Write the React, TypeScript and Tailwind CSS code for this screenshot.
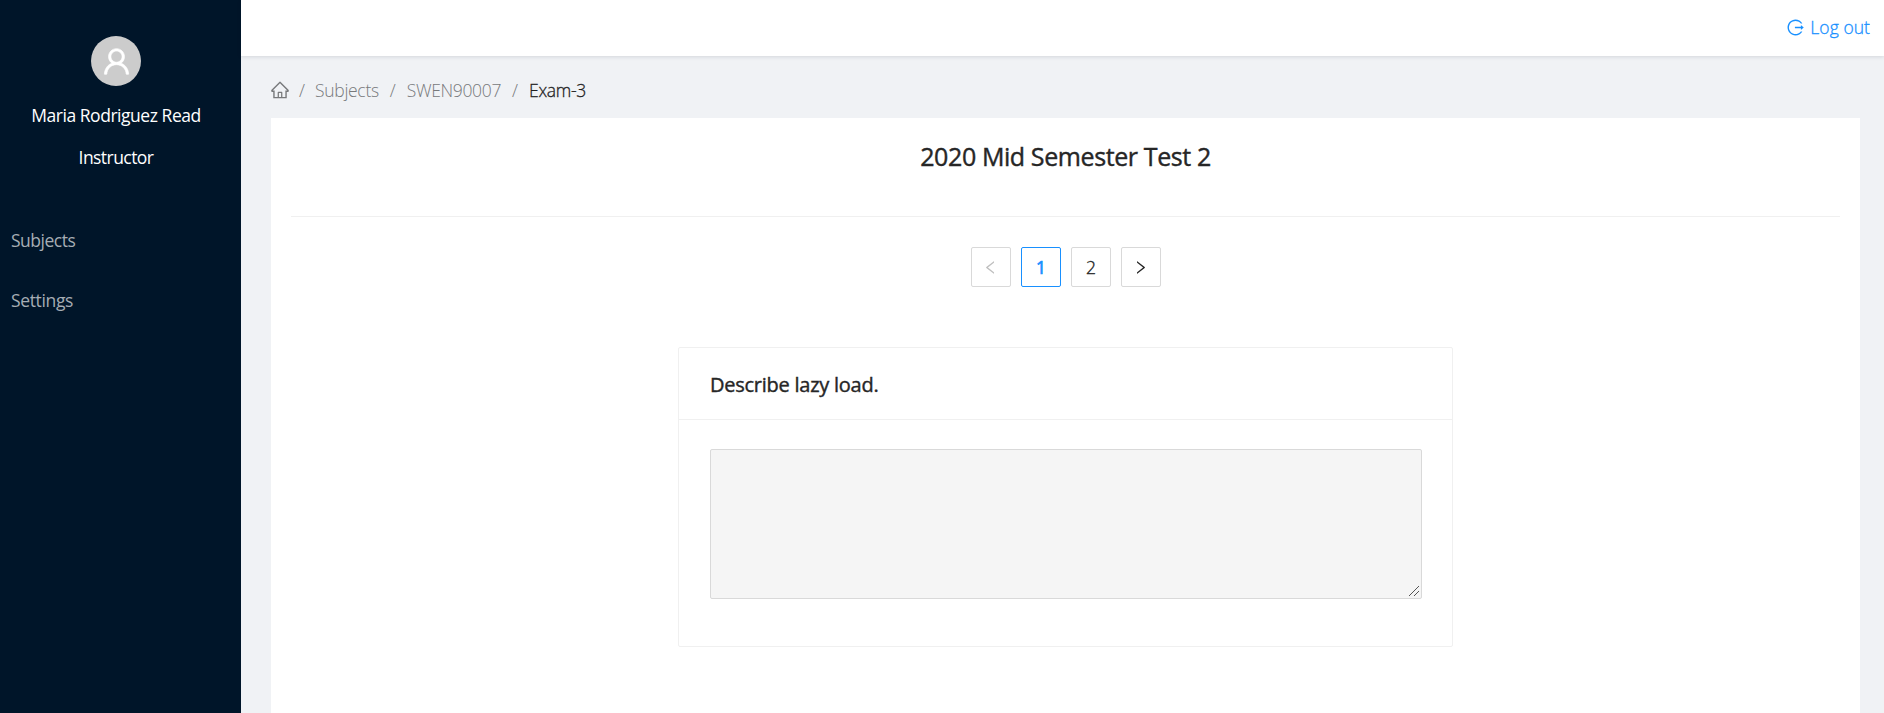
import type { ReactNode } from "react";
import { AiOutlineHome, AiOutlineLeft, AiOutlineLogout, AiOutlineRight, AiOutlineUser } from "react-icons/ai";

function Sidebar() {
  return (
    <aside className="flex w-[241px] shrink-0 flex-col bg-[#001529]">
      <div className="flex flex-col items-center pt-9 pr-[9px] text-[17.5px] text-white">
        <div className="flex size-[50px] items-center justify-center rounded-full bg-[#ccc]">
          <AiOutlineUser className="size-[33px] stroke-white stroke-[20]" />
        </div>
        <div className="mt-[8px] h-[42px] leading-[42px] tracking-[-0.46px] whitespace-nowrap">Maria Rodriguez Read</div>
        <div className="h-[42px] leading-[42px] tracking-[-0.55px]">Instructor</div>
      </div>
      <nav className="mt-[32px] flex flex-col pl-[11px] text-[17.5px] text-[#a6adb4]">
        <a className="h-[60px] leading-[60px] tracking-[-0.5px]">Subjects</a>
        <a className="h-[60px] leading-[60px] tracking-[-0.35px]">Settings</a>
      </nav>
    </aside>
  );
}

function PageButton({ children, tone }: { children: ReactNode; tone: string }) {
  return (
    <button className={`flex size-[40px] items-center justify-center rounded-[2px] border bg-white text-[17.5px] ${tone}`}>
      {children}
    </button>
  );
}

function Separator() {
  return <span className="mx-[10px] w-[8px] text-center">/</span>;
}

export default function App() {
  return (
    <div className="flex h-[713px] w-full overflow-hidden bg-[#f0f2f5] font-['Open_Sans',sans-serif] text-[#262626]">
      <Sidebar />
      <div className="flex min-w-0 flex-1 flex-col">
        <header className="z-10 flex h-14 shrink-0 items-center justify-end bg-white pr-[14px] pb-[2px] text-[17.5px] text-[#1890ff] shadow-[0_1px_4px_rgba(0,21,41,0.12)]">
          <AiOutlineLogout className="mr-[5px] size-[19px]" />
          <span className="font-light tracking-[0.05px] [-webkit-text-stroke:0.3px]">Log out</span>
        </header>
        <main className="flex flex-1 flex-col pr-6 pl-[30px]">
          <nav className="flex h-[62px] items-center pt-[6px] text-[17.5px] font-light text-[#77797b]">
            <AiOutlineHome className="-ml-px size-[20px]" />
            <span className="mr-[9px] ml-[8px] w-[8px] text-center">/</span>
            <span className="tracking-[-0.3px]">Subjects</span>
            <Separator />
            <span className="tracking-[-0.35px]">SWEN90007</span>
            <Separator />
            <span className="tracking-[-0.3px] text-[#1f1f1f] [-webkit-text-stroke:0.3px]">Exam-3</span>
          </nav>
          <section className="flex flex-1 flex-col bg-white px-5">
            <h1 className="h-[98px] text-center text-[25px] leading-[77px] tracking-[-0.4px] [-webkit-text-stroke:0.4px]">2020 Mid Semester Test 2</h1>
            <div className="h-px bg-[#f0f0f0]" />
            <div className="mt-[30px] flex justify-center gap-[10px] pl-px">
              <PageButton tone="border-[#d9d9d9] pr-[2px] text-[#bfbfbf]"><AiOutlineLeft className="size-[17px]" /></PageButton>
              <PageButton tone="border-[#1890ff] text-[#1890ff] [-webkit-text-stroke:0.7px]">1</PageButton>
              <PageButton tone="border-[#d9d9d9] font-light [-webkit-text-stroke:0.4px]">2</PageButton>
              <PageButton tone="border-[#d9d9d9] pr-[2px]"><AiOutlineRight className="size-[17px]" /></PageButton>
            </div>
            <article className="mt-[60px] h-[300px] w-[775px] self-center rounded-[2px] border border-[#f0f0f0]">
              <h2 className="h-[72px] border-b border-[#f0f0f0] pl-[31px] text-[20px] leading-[73px] tracking-[-0.25px] [-webkit-text-stroke:0.4px]">Describe lazy load.</h2>
              <div className="pt-[29px] pr-[30px] pl-[31px]">
                <div className="relative w-[712px]">
                  <textarea disabled aria-label="Answer" className="block h-[150px] w-full resize-none rounded-[2px] border border-[#d9d9d9] bg-[#f5f5f5]" />
                  <svg className="absolute right-[3px] bottom-[3px] size-[10px]" viewBox="0 0 10 10" fill="none" stroke="#555" strokeWidth="1">
                    <path d="M0 10 10 0M5 10 10 5" />
                  </svg>
                </div>
              </div>
            </article>
          </section>
        </main>
      </div>
    </div>
  );
}
